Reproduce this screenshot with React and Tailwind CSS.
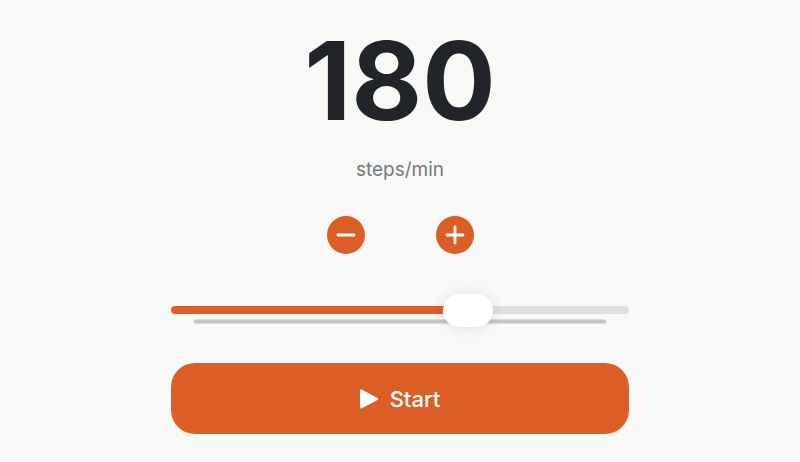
import { useState } from "react";

const MIN = 100;
const MAX = 220;

export default function App() {
  const [pace, setPace] = useState(180);
  const [running, setRunning] = useState(false);
  const percent = ((pace - MIN) / (MAX - MIN)) * 100;
  const change = (step) => setPace((p) => Math.min(MAX, Math.max(MIN, p + step)));

  return (
    <main className="flex min-h-screen flex-col items-center bg-[#f8f8f6] px-6 pt-6 pb-7 font-['Inter','Liberation_Sans',sans-serif]">
      <output htmlFor="pace" className="text-[109px] leading-28 font-bold text-[#212429]">
        {pace}
      </output>
      <label htmlFor="pace" className="mt-[22px] text-[19px] leading-6 text-[#747a80]">
        steps/min
      </label>

      <div className="mt-[34px] flex gap-[71px]">
        <button
          type="button"
          aria-label="Decrease"
          onClick={() => change(-1)}
          className="flex size-[38px] items-center justify-center rounded-full bg-[#db5e26] text-white"
        >
          <svg viewBox="0 0 20 20" className="size-5" fill="none" stroke="currentColor" strokeWidth="2.8" strokeLinecap="round">
            <path d="M2 10h16" />
          </svg>
        </button>
        <button
          type="button"
          aria-label="Increase"
          onClick={() => change(1)}
          className="flex size-[38px] items-center justify-center rounded-full bg-[#db5e26] text-white"
        >
          <svg viewBox="0 0 20 20" className="size-5" fill="none" stroke="currentColor" strokeWidth="2.8" strokeLinecap="round">
            <path d="M2 10h16M10 2v16" />
          </svg>
        </button>
      </div>

      <div className="relative mt-[39px] w-full max-w-[458px]">
        <div
          aria-hidden="true"
          className="absolute inset-x-[23px] top-[26px] h-[5px] rounded-full bg-[#dcdcdc] bg-[radial-gradient(circle,#c0c1c3_1px,transparent_2px)] bg-size-[3px_5px]"
        />
        <input
          id="pace"
          type="range"
          min={MIN}
          max={MAX}
          value={pace}
          onChange={(e) => setPace(Number(e.target.value))}
          style={{ "--fill": `${percent}%` }}
          className="relative block h-[33px] w-full cursor-pointer appearance-none bg-transparent [&::-webkit-slider-runnable-track]:h-2 [&::-webkit-slider-runnable-track]:rounded-full [&::-webkit-slider-runnable-track]:bg-[linear-gradient(to_right,#db5e26_var(--fill),#dededc_var(--fill))] [&::-webkit-slider-thumb]:-mt-3 [&::-webkit-slider-thumb]:h-[33px] [&::-webkit-slider-thumb]:w-[50px] [&::-webkit-slider-thumb]:appearance-none [&::-webkit-slider-thumb]:rounded-full [&::-webkit-slider-thumb]:bg-white [&::-webkit-slider-thumb]:shadow-[0_1px_14px_rgba(0,0,0,0.1)]"
        />
      </div>

      <button
        type="button"
        onClick={() => setRunning(!running)}
        className="mt-[37px] flex h-[71px] w-full max-w-[458px] items-center justify-center gap-3 rounded-3xl bg-[#db5e26] text-[22px] leading-7 font-medium text-white"
      >
        <svg viewBox="0 0 18 20" className="h-5 w-[18px]" fill="currentColor" stroke="currentColor" strokeWidth="2" strokeLinejoin="round" aria-hidden="true">
          {running ? <path d="M3 2h3v16H3zM12 2h3v16h-3z" /> : <path d="M1 1.5v17L17 10z" />}
        </svg>
        {running ? "Stop" : "Start"}
      </button>
    </main>
  );
}
